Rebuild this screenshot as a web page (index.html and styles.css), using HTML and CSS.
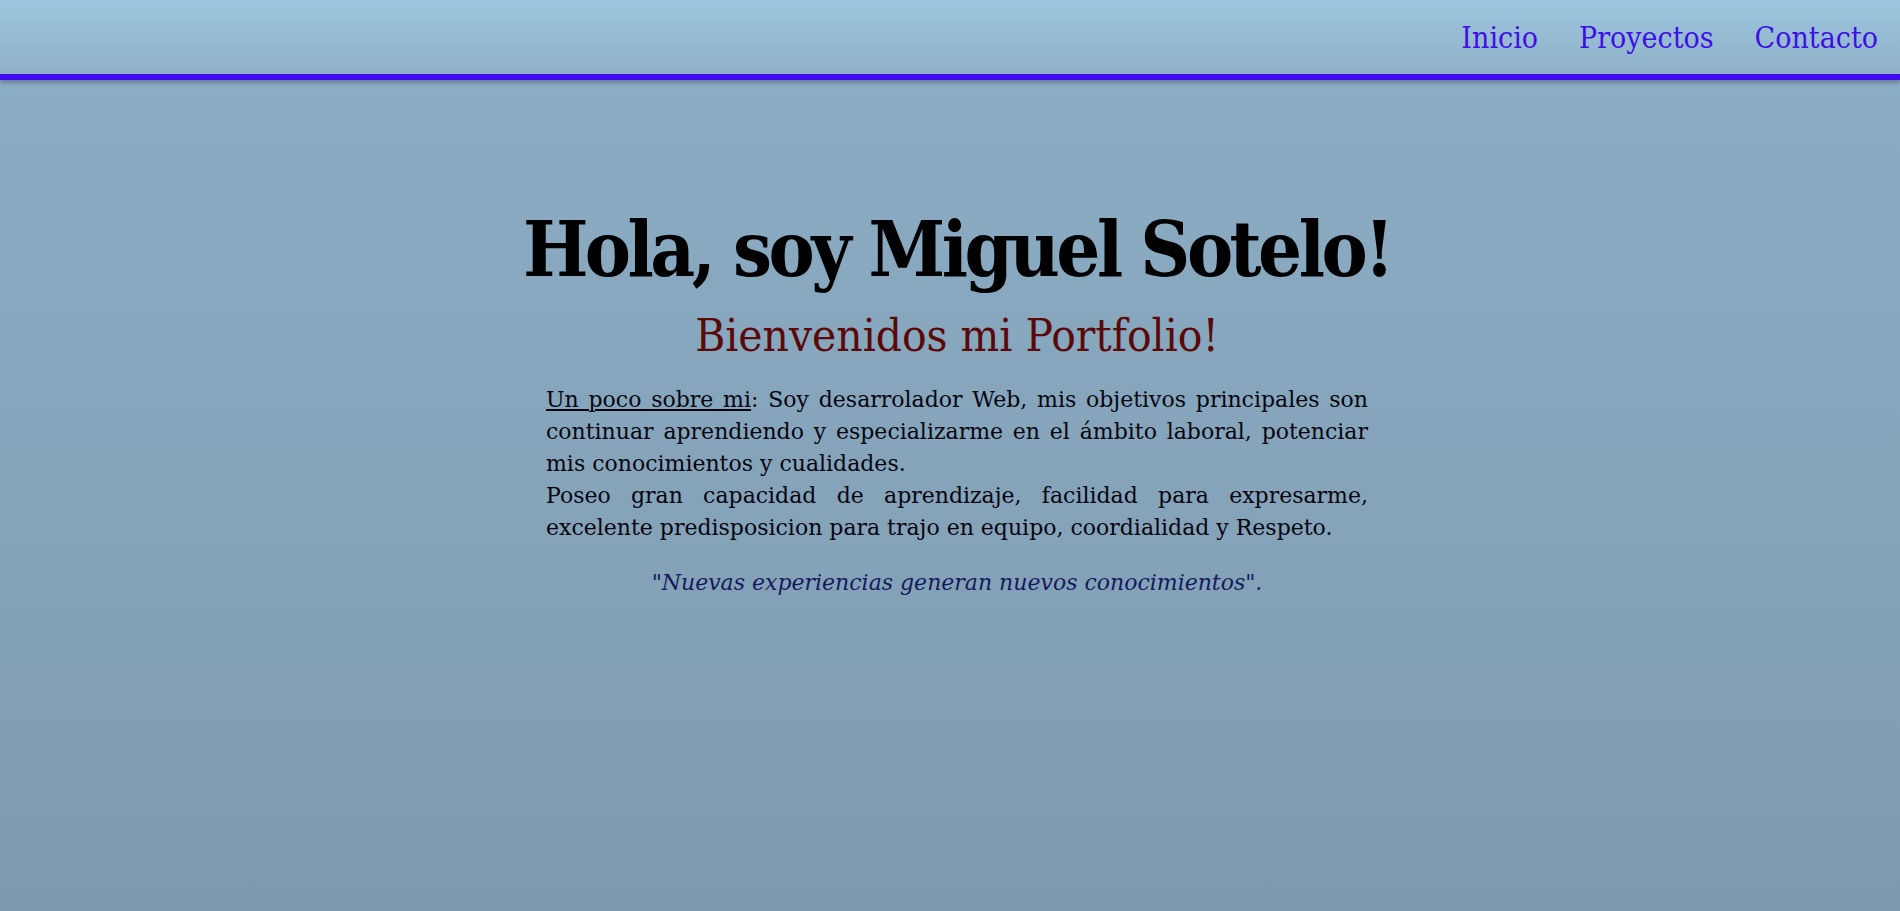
FILE: index.html
```html
<!DOCTYPE html>
<html lang="es">
<head>
<meta charset="utf-8">
<title>Miguel Sotelo - Portfolio</title>
<link rel="stylesheet" href="styles.css">
</head>
<body>
<header class="topbar">
  <nav class="nav">
    <a class="nav-link" href="#">Inicio</a>
    <a class="nav-link" href="#">Proyectos</a>
    <a class="nav-link" href="#">Contacto</a>
  </nav>
</header>
<main class="hero">
  <h1 class="hero-title">Hola, soy Miguel Sotelo!</h1>
  <h2 class="hero-subtitle">Bienvenidos mi Portfolio!</h2>
  <p class="about"><span class="about-label">Un poco sobre mi</span>: Soy desarrolador Web, mis objetivos principales son continuar aprendiendo y especializarme en el ámbito laboral, potenciar mis conocimientos y cualidades.<br>Poseo gran capacidad de aprendizaje, facilidad para expresarme, excelente predisposicion para trajo en equipo, coordialidad y Respeto.</p>
  <p class="quote">"Nuevas experiencias generan nuevos conocimientos".</p>
</main>
</body>
</html>
```

FILE: styles.css
```css
html, body {
  margin: 0;
  padding: 0;
}

body {
  min-height: 911px;
  background: linear-gradient(to bottom, #8fb2c9 0px, #8aacc3 120px, #7f9aaf 911px);
  font-family: "DejaVu Serif", "Liberation Serif", serif;
  color: #000;
}

.topbar {
  height: 74px;
  background: linear-gradient(to bottom, #9dc5df, #8fb1c8);
  border-bottom: 6px solid #4008ee;
  box-shadow: 0 3px 4px rgba(40, 50, 70, 0.35);
  display: flex;
  justify-content: flex-end;
  align-items: center;
  padding-right: 22px;
}

.nav {
  display: flex;
  gap: 41px;
  padding-top: 1px;
}

.nav-link {
  font-family: "DejaVu Serif Condensed", "DejaVu Serif", serif;
  font-stretch: condensed;
  font-size: 30px;
  color: #3f10e6;
  text-decoration: none;
  line-height: 1;
}

.hero {
  display: flex;
  flex-direction: column;
  align-items: center;
  padding-top: 131px;
  padding-left: 14px;
}

.hero-title {
  margin: 0;
  font-family: "DejaVu Serif Condensed", "DejaVu Serif", serif;
  font-stretch: condensed;
  font-weight: bold;
  font-size: 77px;
  letter-spacing: -3.5px;
  line-height: 1;
  color: #000;
}

.hero-subtitle {
  margin: 25px 0 0;
  font-family: "DejaVu Serif Condensed", "DejaVu Serif", serif;
  font-stretch: condensed;
  font-weight: normal;
  font-size: 45.5px;
  line-height: 1;
  color: #5a0808;
}

.about {
  margin: 25px 0 0;
  width: 822px;
  font-size: 22px;
  line-height: 32px;
  text-align: justify;
  color: #05050f;
}

.about-label {
  text-decoration: underline;
}

.quote {
  margin: 23px 0 0;
  font-size: 22px;
  line-height: 32px;
  font-style: italic;
  color: #141a5e;
  text-align: center;
}
```
